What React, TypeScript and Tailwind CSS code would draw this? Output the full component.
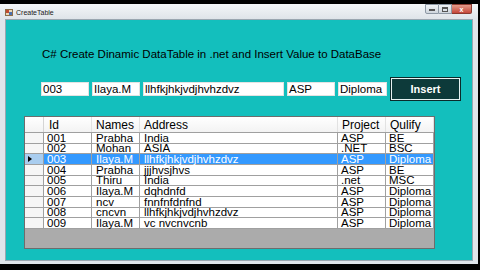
import React from 'react';

const rows = [
  { id: '001', name: 'Prabha', address: 'India', project: 'ASP', qulify: 'BE' },
  { id: '002', name: 'Mohan', address: 'ASIA', project: '.NET', qulify: 'BSC' },
  { id: '003', name: 'Ilaya.M', address: 'llhfkjhkjvdjhvhzdvz', project: 'ASP', qulify: 'Diploma', selected: true },
  { id: '004', name: 'Prabha', address: 'jjjhvsjhvs', project: 'ASP', qulify: 'BE' },
  { id: '005', name: 'Thiru', address: 'India', project: '.net', qulify: 'MSC' },
  { id: '006', name: 'Ilaya.M', address: 'dqhdnfd', project: 'ASP', qulify: 'Diploma' },
  { id: '007', name: 'ncv', address: 'fnnfnfdnfnd', project: 'ASP', qulify: 'Diploma' },
  { id: '008', name: 'cncvn', address: 'llhfkjhkjvdjhvhzdvz', project: 'ASP', qulify: 'Diploma' },
  { id: '009', name: 'Ilaya.M', address: 'vc nvcnvcnb', project: 'ASP', qulify: 'Diploma' },
];

const font = { fontFamily: '"Liberation Sans", Arial, sans-serif' };

function TitleBar() {
  return (
    <div className="flex h-[15px] items-center bg-gradient-to-b from-[#f4f6f8] to-[#dfe4e9] pl-[5px] pr-[6px]">
      <svg width="8" height="7" viewBox="0 0 8 7" className="mt-[2px]">
        <rect x="0" y="0" width="8" height="7" fill="#8a6d4a" />
        <rect x="1" y="1" width="6" height="5" fill="#e8d8b8" />
        <rect x="1" y="1" width="3" height="3" fill="#c04a30" />
        <rect x="4" y="3" width="3" height="3" fill="#4a70b0" />
      </svg>
      <span className="ml-[3px] mt-[1px] text-[7px] leading-none text-[#1a1a1a]">CreateTable</span>
      <div className="ml-auto flex self-start">
        <div className="flex h-[10px] w-[14px] items-end justify-center rounded-bl-[2px] border border-[#8d98a4] bg-gradient-to-b from-[#f0f3f6] to-[#cfd6dd] pb-[2px]">
          <div className="h-[2px] w-[6px] border border-[#555]" />
        </div>
        <div className="flex h-[10px] w-[13px] items-center justify-center border-y border-r border-[#8d98a4] bg-gradient-to-b from-[#f0f3f6] to-[#cfd6dd]">
          <div className="h-[5px] w-[6px] border border-[#555] border-t-2" />
        </div>
        <div className="flex h-[10px] w-[20px] items-center justify-center rounded-br-[2px] border-y border-r border-[#8a3a30] bg-gradient-to-b from-[#e39a8a] to-[#c4463a] text-[7px] font-bold leading-none text-white">
          x
        </div>
      </div>
    </div>
  );
}

function Field({ value, w }: { value: string; w: string }) {
  return (
    <div className={`${w} flex h-[14px] items-center whitespace-nowrap border border-[#e3e3e3] bg-white pl-[1px] text-[11.5px] leading-[12px] text-black`}>
      {value}
    </div>
  );
}

const cols = ['w-[48px]', 'w-[48px]', 'w-[198px]', 'w-[48px]', 'w-[48px]'];
const pads = ['pl-[3px]', 'pl-[4px]', 'pl-[4px]', 'pl-[3px]', 'pl-[3px]'];

function Grid() {
  return (
    <div className="ml-[18px] mt-[16px] flex h-[133px] w-[411px] flex-col border border-[#6d6d6d] bg-[#ababab]">
      <div className="flex h-[16px] bg-gradient-to-b from-white to-[#f3f3f3] border-b border-[#a0a0a0]">
        <div className="w-[19px] border-r border-[#d5d5d5]" />
        {['Id', 'Names', 'Address', 'Project', 'Qulify'].map((h, i) => (
          <div
            key={h}
            className={`${cols[i]} flex items-center border-r border-[#e2e2e2] ${i === 0 ? 'pl-[5px]' : 'pl-[4px]'} text-[12px] leading-[14px] text-black`}
          >
            {h}
          </div>
        ))}
      </div>
      {rows.map((r) => {
        const vals = [r.id, r.name, r.address, r.project, r.qulify];
        return (
          <div key={r.id} className="flex h-[10.67px]">
            <div
              className={`flex w-[19px] items-center border-b border-r border-[#a0a0a0] pl-[3px] ${
                r.selected ? 'bg-[#a9cdef]' : 'bg-[#f6f6f6]'
              }`}
            >
              {r.selected && (
                <svg width="4" height="6" viewBox="0 0 4 6">
                  <path d="M0 0 L4 3 L0 6 Z" fill="#000" />
                </svg>
              )}
            </div>
            {vals.map((v, i) => (
              <div
                key={i}
                className={`${cols[i]} ${pads[i]} flex items-center whitespace-nowrap border-b border-r border-[#a0a0a0] text-[11.5px] leading-[10px] ${
                  r.selected ? 'bg-[#3399ff] text-white' : 'bg-white text-black'
                }`}
              >
                {v}
              </div>
            ))}
          </div>
        );
      })}
    </div>
  );
}

export default function App() {
  return (
    <div className="h-[270px] w-[480px] overflow-hidden bg-black pt-[4px]" style={font}>
      <div className="flex h-[260px] w-[478px] flex-col bg-[#dfe5ea] px-[5px] pb-[3px]">
        <div className="-mx-[5px]">
          <TitleBar />
        </div>
        <div className="flex flex-1 flex-col border border-[#9aa6b0] bg-[#13bfbd]">
          <div className="ml-[36px] mt-[28px] text-[11.5px] leading-[13px] text-black">
            C# Create Dinamic DataTable in .net and Insert Value to DataBase
          </div>
          <div className="ml-[35px] mt-[17px] flex h-[22px] items-center gap-[3px]">
            <Field value="003" w="w-[48px]" />
            <Field value="Ilaya.M" w="w-[48px]" />
            <Field value="llhfkjhkjvdjhvhzdvz" w="w-[141px]" />
            <Field value="ASP" w="w-[48px]" />
            <Field value="Diploma" w="w-[49px]" />
            <button className="ml-[1px] flex h-[22px] w-[69px] items-center justify-center border border-[#e6f2f2] bg-[#0d3a3a] text-[11px] font-bold leading-none text-white outline outline-1 outline-[#0a2a2a]">
              Insert
            </button>
          </div>
          <Grid />
        </div>
      </div>
    </div>
  );
}
